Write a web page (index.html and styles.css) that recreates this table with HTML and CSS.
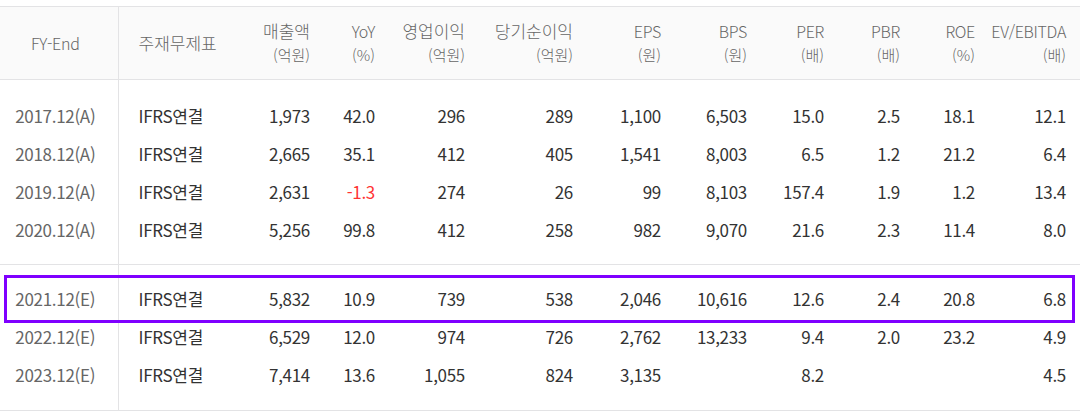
FILE: index.html
```html
<!DOCTYPE html>
<html lang="ko">
<head>
<meta charset="utf-8">
<title>재무 요약</title>
<link rel="stylesheet" href="styles.css">
</head>
<body>
<div class="wrap">
<table class="fin">
  <colgroup>
    <col class="w-fy"><col class="w-type"><col class="w-sales"><col class="w-yoy"><col class="w-op"><col class="w-net">
    <col class="w-eps"><col class="w-bps"><col class="w-per"><col class="w-pbr"><col class="w-roe"><col class="w-ev">
  </colgroup>
  <thead>
    <tr>
      <th class="fy">FY-End</th>
      <th class="type ko">주재무제표</th>
      <th class="ko">매출액<span class="unit">(억원)</span></th>
      <th>YoY<span class="unit">(%)</span></th>
      <th class="ko">영업이익<span class="unit">(억원)</span></th>
      <th class="ko">당기순이익<span class="unit">(억원)</span></th>
      <th>EPS<span class="unit">(원)</span></th>
      <th>BPS<span class="unit">(원)</span></th>
      <th>PER<span class="unit">(배)</span></th>
      <th>PBR<span class="unit">(배)</span></th>
      <th>ROE<span class="unit">(%)</span></th>
      <th>EV/EBITDA<span class="unit">(배)</span></th>
    </tr>
  </thead>
  <tbody class="actual">
    <tr><td class="fy">2017.12(A)</td><td class="type">IFRS연결</td><td>1,973</td><td>42.0</td><td>296</td><td>289</td><td>1,100</td><td>6,503</td><td>15.0</td><td>2.5</td><td>18.1</td><td>12.1</td></tr>
    <tr><td class="fy">2018.12(A)</td><td class="type">IFRS연결</td><td>2,665</td><td>35.1</td><td>412</td><td>405</td><td>1,541</td><td>8,003</td><td>6.5</td><td>1.2</td><td>21.2</td><td>6.4</td></tr>
    <tr><td class="fy">2019.12(A)</td><td class="type">IFRS연결</td><td>2,631</td><td class="neg">-1.3</td><td>274</td><td>26</td><td>99</td><td>8,103</td><td>157.4</td><td>1.9</td><td>1.2</td><td>13.4</td></tr>
    <tr><td class="fy">2020.12(A)</td><td class="type">IFRS연결</td><td>5,256</td><td>99.8</td><td>412</td><td>258</td><td>982</td><td>9,070</td><td>21.6</td><td>2.3</td><td>11.4</td><td>8.0</td></tr>
  </tbody>
  <tbody class="estimate">
    <tr><td class="fy">2021.12(E)</td><td class="type">IFRS연결</td><td>5,832</td><td>10.9</td><td>739</td><td>538</td><td>2,046</td><td>10,616</td><td>12.6</td><td>2.4</td><td>20.8</td><td>6.8</td></tr>
    <tr><td class="fy">2022.12(E)</td><td class="type">IFRS연결</td><td>6,529</td><td>12.0</td><td>974</td><td>726</td><td>2,762</td><td>13,233</td><td>9.4</td><td>2.0</td><td>23.2</td><td>4.9</td></tr>
    <tr><td class="fy">2023.12(E)</td><td class="type">IFRS연결</td><td>7,414</td><td>13.6</td><td>1,055</td><td>824</td><td>3,135</td><td></td><td>8.2</td><td></td><td></td><td>4.5</td></tr>
  </tbody>
</table>
<div class="highlight"></div>
</div>
</body>
</html>
```

FILE: styles.css
```css
html, body {
  margin: 0;
  padding: 0;
  background: #ffffff;
}

.wrap {
  position: relative;
  width: 1080px;
  padding-top: 6px;
}

.fin {
  width: 1080px;
  border-collapse: collapse;
  table-layout: fixed;
  font-family: "Noto Sans CJK KR", "Noto Sans", sans-serif;
  color: #333333;
}

.w-fy { width: 118px; }
.w-type { width: 118px; }
.w-sales { width: 88px; }
.w-yoy { width: 65px; }
.w-op { width: 90px; }
.w-net { width: 108px; }
.w-eps { width: 88px; }
.w-bps { width: 86px; }
.w-per { width: 77px; }
.w-pbr { width: 76px; }
.w-roe { width: 75px; }
.w-ev { width: 91px; }

.fin th {
  background: #fafafa;
  border-top: 1px solid #e3e3e5;
  border-bottom: 1px solid #e3e3e5;
  height: 72px;
  padding: 0 14px 0 0;
  font-weight: 300;
  font-size: 16px;
  line-height: 24px;
  color: #666666;
  text-align: right;
  vertical-align: middle;
  white-space: nowrap;
  letter-spacing: -0.3px;
}

.fin th.ko {
  font-size: 17px;
  letter-spacing: 0;
}

.fin .unit {
  display: block;
  font-size: 15px;
  letter-spacing: 0;
}

.fin td {
  padding: 0 14px 0 0;
  font-size: 17px;
  line-height: 38px;
  text-align: right;
  white-space: nowrap;
  letter-spacing: -0.3px;
}

.fin .fy {
  text-align: center;
  padding: 0 7px 0 0;
  border-right: 1px solid #e3e3e5;
  color: #666666;
}

.fin .type {
  text-align: left;
  padding: 0 0 0 20px;
}

.fin td.neg {
  color: #ff3333;
}

.fin tbody {
  border-bottom: 1px solid #e3e3e5;
}

.actual tr:first-child td { padding-top: 17px; }
.actual tr:last-child td { padding-bottom: 15px; }
.estimate tr:first-child td { padding-top: 15px; }
.estimate tr:last-child td { padding-bottom: 16px; }

.highlight {
  position: absolute;
  left: 4px;
  top: 275px;
  width: 1065px;
  height: 42px;
  border: 3px solid #7f00ff;
  pointer-events: none;
}
```
